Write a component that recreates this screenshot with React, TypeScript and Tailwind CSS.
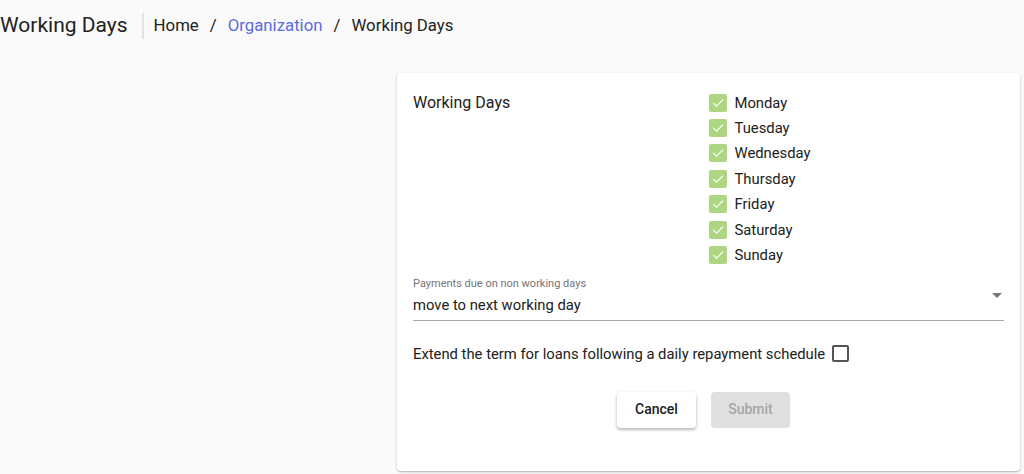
import React from 'react';

const days = ['Monday', 'Tuesday', 'Wednesday', 'Thursday', 'Friday', 'Saturday', 'Sunday'];

function CheckedBox() {
  return (
    <span className="w-[18px] h-[18px] rounded-[2px] bg-[#aed581] flex items-center justify-center">
      <svg width="14" height="14" viewBox="0 0 24 24" fill="none">
        <path d="M4.5 12.5l5 5L20 7" stroke="#ffffff" strokeWidth="2" strokeLinecap="square" />
      </svg>
    </span>
  );
}

export default function App() {
  return (
    <div
      className="min-h-[474px] bg-[#fafafa] text-[#212121]"
      style={{ fontFamily: 'Roboto, "Liberation Sans", sans-serif' }}
    >
      {/* Header / breadcrumb */}
      <div className="flex items-center h-[51px]">
        <h1 className="text-[21px] leading-none pr-[14px] text-[#212121]">Working Days</h1>
        <div className="w-[2px] h-[26px] bg-[#e3e3e3]" />
        <nav className="flex items-center text-[16.8px] pl-[10px] text-[#212121]">
          <span>Home</span>
          <span className="px-[11px]">/</span>
          <span className="text-[#5b6be0]">Organization</span>
          <span className="px-[11px]">/</span>
          <span>Working Days</span>
        </nav>
      </div>

      <div className="flex justify-end pr-[4px] pt-[22px]">
        <div className="w-[623px] h-[398px] bg-white rounded-[4px] shadow-[0_1px_3px_rgba(0,0,0,0.2),0_1px_1px_rgba(0,0,0,0.12)] px-[16px] pt-[17px]">
          <div className="flex">
            <div className="flex-1 text-[16px] h-[25px] flex items-center">Working Days</div>
            <div className="flex-1 flex flex-col">
              {days.map((d) => (
                <label key={d} className="h-[25.4px] flex items-center gap-[8px] text-[14.8px]">
                  <CheckedBox />
                  <span>{d}</span>
                </label>
              ))}
            </div>
          </div>

          <div className="mt-[9px] border-b border-[#a8a8a8] pb-[5px] relative">
            <div className="text-[11px] text-[#757575] leading-[14px]">Payments due on non working days</div>
            <div className="text-[14.8px] leading-[20px] mt-[4px]">move to next working day</div>
            <svg className="absolute right-[2px] top-[16px]" width="10" height="5" viewBox="0 0 10 5">
              <path d="M0 0h10L5 5z" fill="#757575" />
            </svg>
          </div>

          <div className="flex items-center mt-[22px] text-[14.8px]">
            <span>Extend the term for loans following a daily repayment schedule</span>
            <span className="ml-[7px] w-[17px] h-[17px] border-2 border-[#545454] rounded-[2px]" />
          </div>

          <div className="flex justify-center gap-[15px] mt-[27px] pr-[10px]">
            <button className="w-[79px] h-[36px] rounded-[4px] bg-white text-[14px] font-medium text-[#212121] shadow-[0_2px_3px_rgba(0,0,0,0.2),0_1px_4px_rgba(0,0,0,0.12)]">
              Cancel
            </button>
            <button className="w-[79px] h-[36px] rounded-[4px] bg-[#e0e0e0] text-[14px] font-medium text-[#a6a6a6]">
              Submit
            </button>
          </div>
        </div>
      </div>
    </div>
  );
}
